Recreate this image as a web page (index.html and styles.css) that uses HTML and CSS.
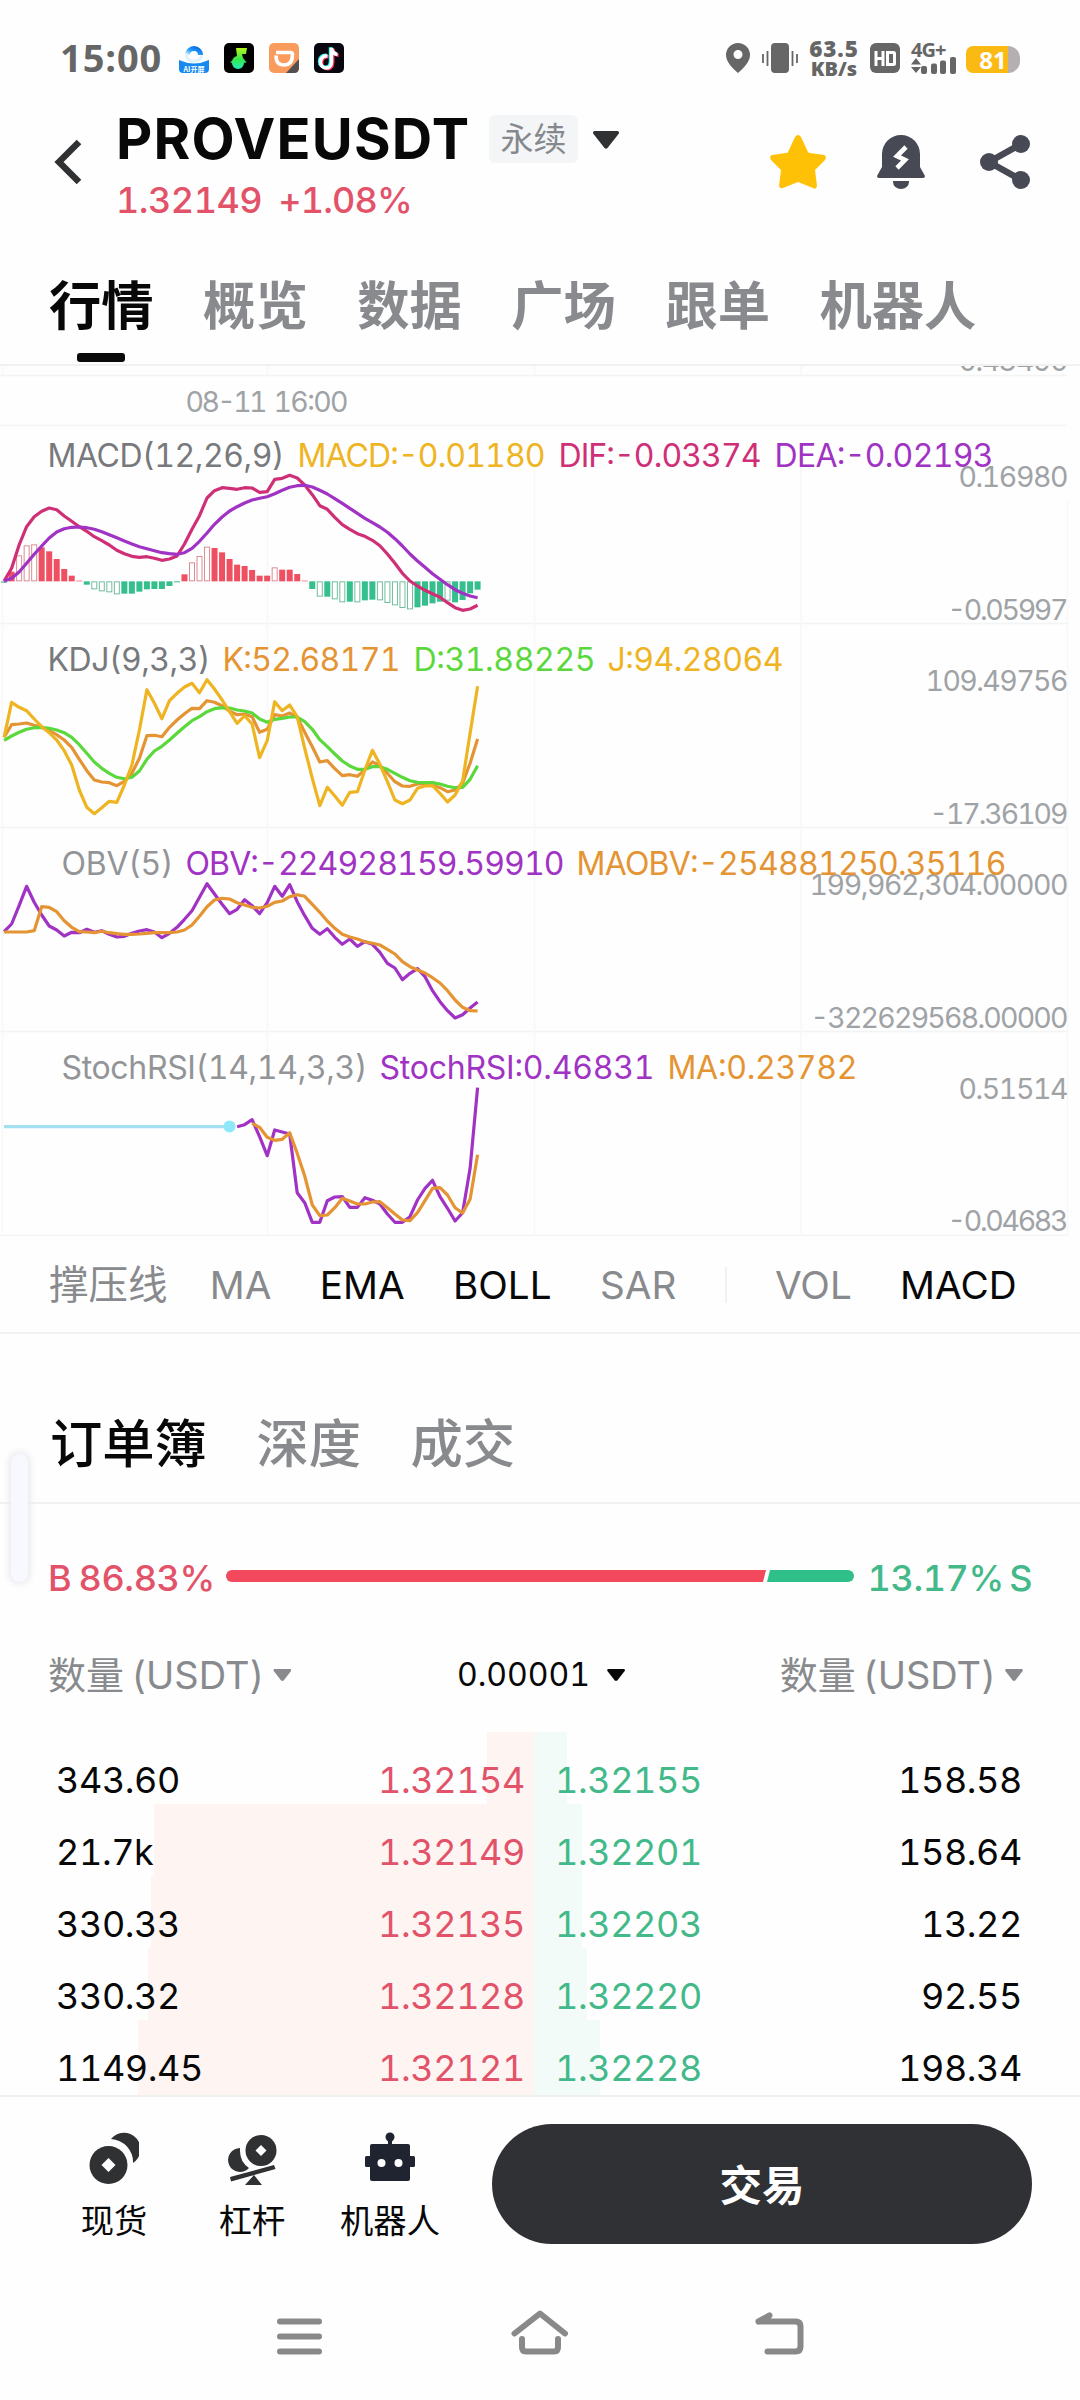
FILE: index.html
```html
<!DOCTYPE html>
<html lang="zh-CN">
<head>
<meta charset="utf-8">
<title>PROVEUSDT</title>
<link rel="stylesheet" href="styles.css">
</head>
<body>
<div class="screen">
  <div class="status">
    <span class="clock">15:00</span>
    <div class="apps">
      <svg viewBox="0 0 30 30"><defs><linearGradient id="ring" x1="1" y1="0" x2="0" y2="1"><stop offset="0" stop-color="#0868e8"/><stop offset=".55" stop-color="#27a0f8"/><stop offset="1" stop-color="#e4f6ff"/></linearGradient></defs><path d="M8.500 17a6.500 6.500 0 1 1 13 0" transform="translate(0 -5)" fill="none" stroke="url(#ring)" stroke-width="5"/><path d="M7 12q1 6 8 6t8-6" fill="none" stroke="#dff2ff" stroke-width="3"/><path d="M0 17q15 7 30 0v9q0 4-4 4H4q-4 0-4-4z" fill="#1689ee"/><text x="15" y="29" class="app-text">AI开屏</text></svg>
      <svg viewBox="0 0 30 30"><defs><linearGradient id="lime" x1="0" y1="0" x2="0" y2="1"><stop offset="0" stop-color="#b8f51c"/><stop offset=".55" stop-color="#35e84a"/><stop offset="1" stop-color="#22efc0"/></linearGradient></defs><rect width="30" height="30" rx="5" fill="#000"/><path d="M12 5h11l-1 6h-4l1 4a7 6 0 0 1 2 3l2 1-3 1a6 6 0 0 1-12 0l-2-1 2-1q1-4 5-5z" fill="url(#lime)"/></svg>
      <svg viewBox="0 0 30 30"><rect width="30" height="30" rx="5" fill="#f99b5c"/><path d="M7 9.500h14.500q2 0 2 2 0 10.500-8.500 10.500T7.200 12.500" fill="none" stroke="#fff" stroke-width="3.600"/><path d="M30 16v9q0 5-5 5h-8z" fill="#55504f"/></svg>
      <svg viewBox="0 0 30 30"><rect width="30" height="30" rx="5" fill="#08070f"/><g fill="none" stroke-width="3.500"><path d="M13.500 13c-5-.5-7 3-7 6 0 4 3 6 6 6s5-3 5-6V5q1 6 6 6.500" stroke="#fe2c55" transform="translate(1.200 .8)"/><path d="M13.500 13c-5-.5-7 3-7 6 0 4 3 6 6 6s5-3 5-6V5q1 6 6 6.500" stroke="#25f4ee" transform="translate(-1 -.8)"/><path d="M13.500 13c-5-.5-7 3-7 6 0 4 3 6 6 6s5-3 5-6V5q1 6 6 6.500" stroke="#fff"/></g></svg>
    </div>
    <div class="system">
      <svg class="pin" viewBox="0 0 24 30"><path fill-rule="evenodd" d="M12 0a12 12 0 0 0-12 12c0 6 5 12 12 18 7-6 12-12 12-18A12 12 0 0 0 12 0zm0 7a4.500 4.500 0 1 1 0 9 4.500 4.500 0 0 1 0-9z"/></svg>
      <svg class="vibrate" viewBox="0 0 36 30"><rect x="9" width="18" height="30" rx="4"/><path d="M1 11v9M5.500 8v15M30.500 8v15M35 11v9" stroke="#666" stroke-width="1.800"/></svg>
      <div class="speed"><b>63.5</b><b>KB/s</b></div>
      <svg class="hd" viewBox="0 0 30 30"><rect width="30" height="30" rx="6"/><path d="M6 8v15M13 8v15M6 15.500h7M17.500 9.500h6q1 0 1 1v10q0 1-1 1h-6z" fill="none" stroke="#fff" stroke-width="3"/></svg>
      <div class="signal"><b>4G+</b><svg viewBox="0 0 45 17"><path d="M0 7.500 5 1l5 6.500zM0 10h10l-5 6z"/><g><rect x="10" y="9" width="6" height="8" rx="2"/><rect x="20" y="6.500" width="6" height="10.500" rx="2"/><rect x="29" y="3.500" width="6" height="13.500" rx="2"/><rect x="39" width="6" height="17" rx="2"/></g></svg></div>
      <div class="battery"><span>81</span></div>
    </div>
  </div>

  <header class="header">
    <svg class="back" viewBox="0 0 28 46"><path d="M25 3 5 23l20 20" fill="none" stroke="#303133" stroke-width="6.500"/></svg>
    <div class="pair">
      <div class="name-row"><h1>PROVEUSDT</h1><span class="badge">永续</span><svg class="drop" viewBox="0 0 26 18"><path d="M1.500 0h23q2.500 1 1 3L14.500 17q-1.500 1.500-3 0L.5 3Q-1 1 1.500 0z" fill="#303133"/></svg></div>
      <div class="price-row"><span>1.32149</span><span class="change">+1.08%</span></div>
    </div>
    <div class="actions">
      <svg class="star" viewBox="0 0 56 54"><path d="M25 2q3-4 6 0l7 15q0 1 2 1l14 2q3 1 1 5L45 35l2 16q-1 4-4 2l-15-6-15 6q-3 1-4-2l2-16L1 25q-2-4 1-5l14-2q2 0 2-1z" fill="#ffc106"/></svg>
      <svg class="bell" viewBox="0 0 48 54"><path d="M5 19a19 19 0 0 1 38 0v13l5 9q0 2-2 2H2q-2 0-2-2l5-9zM16 46h16v1a8 7 0 0 1-16 0z" fill="#474a54"/><path d="m29 12-9 9 8 4-8 8" fill="none" stroke="#fff" stroke-width="4.600"/></svg>
      <svg class="share" viewBox="0 0 50 54"><path d="M41 9 9 27l32 18" fill="none" stroke="#474a54" stroke-width="6.500"/><g fill="#474a54"><circle cx="41" cy="9" r="9"/><circle cx="9" cy="27" r="9"/><circle cx="41" cy="45" r="9"/></g></svg>
    </div>
  </header>

  <nav class="tabs"><span class="active">行情</span><span>概览</span><span>数据</span><span>广场</span><span>跟单</span><span>机器人</span></nav>

  <svg class="charts" viewBox="0 366 1080 870">
    <path class="grid" d="M0 375.500H1067M0 425.500H1067M0 623.500H1067M0 827.500H1067M0 1031.500H1067M0 1235.500H1067"/>
    <path class="grid faint" d="M267.500 366v9M534.500 366v9M801 366v9M267.500 465v771M534.500 465v771M801 465v771M1067.500 500v736M2.500 366v9M2.500 560v676"/>
    <g id="plot"></g>
    <g class="axis" transform="translate(.5 1.300)">
      <text x="958" y="370" textLength="110">0.43490</text>
      <text x="185" y="411" textLength="82">08-11</text>
      <text x="273" y="411" textLength="75">16:00</text>
      <text x="958" y="486" textLength="110">0.16980</text>
      <text x="947" y="619" textLength="121">-0.05997</text>
      <text x="925" y="690" textLength="143">109.49756</text>
      <text x="929" y="823" textLength="139">-17.36109</text>
      <text x="809" y="894" textLength="259">199,962,304.00000</text>
      <text x="810" y="1027" textLength="258">-322629568.00000</text>
      <text x="958" y="1098" textLength="110">0.51514</text>
      <text x="947" y="1230" textLength="121">-0.04683</text>
    </g>
    <g class="legend" transform="translate(.5 .5)">
      <text x="47" y="466" textLength="237" fill="#77797c">MACD(12,26,9)</text>
      <text x="297" y="466" textLength="248" fill="#eeb422">MACD:-0.01180</text>
      <text x="558" y="466" textLength="203" fill="#cf2f77">DIF:-0.03374</text>
      <text x="774" y="466" textLength="219" fill="#a032c4">DEA:-0.02193</text>
      <text x="47" y="670" textLength="163" fill="#77797c">KDJ(9,3,3)</text>
      <text x="222" y="670" textLength="178" fill="#e49432">K:52.68171</text>
      <text x="413" y="670" textLength="182" fill="#5bd83c">D:31.88225</text>
      <text x="607" y="670" textLength="176" fill="#eeb422">J:94.28064</text>
      <text x="61" y="874" textLength="112" fill="#929497">OBV(5)</text>
      <text x="185" y="874" textLength="379" fill="#a032c4">OBV:-224928159.59910</text>
      <text x="576" y="874" textLength="430" fill="#e49432">MAOBV:-254881250.35116</text>
      <text x="61" y="1078" textLength="306" fill="#929497">StochRSI(14,14,3,3)</text>
      <text x="379" y="1078" textLength="275" fill="#a032c4">StochRSI:0.46831</text>
      <text x="667" y="1078" textLength="190" fill="#e49432">MA:0.23782</text>
    </g>
  </svg>

  <div class="indicators"><span>撑压线</span><span>MA</span><span class="on">EMA</span><span class="on">BOLL</span><span>SAR</span><i></i><span>VOL</span><span class="on">MACD</span></div>

  <nav class="tabs book-tabs"><span class="active">订单簿</span><span>深度</span><span>成交</span></nav>

  <div class="ratio">
    <span class="buy">B 86.83%</span>
    <svg viewBox="0 0 628 12"><path d="M6 0h534l-3 12H6A6 6 0 0 1 6 0z" fill="#f3495d"/><path d="M544 0h78a6 6 0 0 1 0 12h-81z" fill="#2fbf89"/></svg>
    <span class="sell">13.17% S</span>
  </div>

  <div class="columns">
    <span class="qty">数量 (USDT)<i class="caret"></i></span>
    <span class="step">0.00001<i class="caret"></i></span>
    <span class="qty right">数量 (USDT)<i class="caret"></i></span>
  </div>

  <div class="book">
    <div class="row"><div class="bid"><i style="width:47px"></i><span>343.60</span><b>1.32154</b></div><div class="ask"><i style="width:33px"></i><b>1.32155</b><span>158.58</span></div></div>
    <div class="row"><div class="bid"><i style="width:380px"></i><span>21.7k</span><b>1.32149</b></div><div class="ask"><i style="width:48px"></i><b>1.32201</b><span>158.64</span></div></div>
    <div class="row"><div class="bid"><i style="width:383px"></i><span>330.33</span><b>1.32135</b></div><div class="ask"><i style="width:48px"></i><b>1.32203</b><span>13.22</span></div></div>
    <div class="row"><div class="bid"><i style="width:386px"></i><span>330.32</span><b>1.32128</b></div><div class="ask"><i style="width:53px"></i><b>1.32220</b><span>92.55</span></div></div>
    <div class="row"><div class="bid"><i style="width:396px"></i><span>1149.45</span><b>1.32121</b></div><div class="ask"><i style="width:66px"></i><b>1.32228</b><span>198.34</span></div></div>
  </div>

  <footer class="dock">
    <div class="dock-item"><svg viewBox="0 0 50 54"><path d="M22 7A16.500 16.500 0 1 1 44 31 23 23 0 0 0 22 7z" fill="#303133"/><circle cx="19.500" cy="33" r="23.500" fill="#fefefe"/><circle cx="19.500" cy="33" r="19" fill="#303133"/><path d="m19.500 26 7 7-7 7-7-7z" fill="#fff"/></svg><span>现货</span></div>
    <div class="dock-item"><svg viewBox="0 0 50 54"><g fill="#303133"><path d="M13 16v3q0 11 9 17a12 12 0 1 1-9-20z"/><circle cx="34" cy="18.500" r="18" fill="#fefefe"/><circle cx="34" cy="18.500" r="15.500"/><path d="m3 45 44-12 1.500 4L4 49.500zM27 43l8 10H18z"/></g><path d="m34 13 5.500 5.500L34 24l-5.500-5.500z" fill="#fff"/></svg><span>杠杆</span></div>
    <div class="dock-item wide"><svg viewBox="0 0 50 54"><g fill="#202330"><circle cx="25" cy="5" r="4.500"/><path d="M23 7h4v6h-4z"/><rect x="5" y="12" width="40" height="37" rx="2"/><rect y="24" width="50" height="11" rx="1.500"/></g><g fill="#fff"><circle cx="16.500" cy="31" r="4"/><circle cx="33.500" cy="31" r="4"/></g></svg><span>机器人</span></div>
    <button class="trade">交易</button>
  </footer>

  <div class="system-nav">
    <svg viewBox="0 0 60 46"><path d="M10 12.500h39M10 27.500h39M10 42.500h39"/></svg>
    <svg viewBox="0 0 60 46"><path d="M4.500 24.500 30 4.500l25 20M12 30v8q0 4.500 4 4.500h28q4 0 4-4.500v-8"/></svg>
    <svg viewBox="0 0 60 46"><path d="m19.500 6.500-11 6M8.500 12.500h37q5 0 5 5v20q0 5-5 5H17.500"/></svg>
  </div>
  <div class="edge-handle"></div>
</div>
<script src="charts.js"></script>
</body>
</html>
```
FILE: styles.css
```css
* { box-sizing: border-box; }
body { margin: 0; background: #fefefe; font-family: Inter, "Noto Sans CJK SC", sans-serif; font-feature-settings: "tnum"; color: #080808; }
svg { display: block; }
.screen { position: relative; width: 1080px; height: 2400px; overflow: hidden; display: flex; flex-direction: column; }
.screen > * { flex-shrink: 0; }

.status { height: 116px; padding: 0 60px; display: flex; align-items: center; color: #666; fill: #666; }
.clock { width: 119px; font: 700 38px/40px "Open Sans", sans-serif; letter-spacing: .9px; margin-top: -2px; }
.apps { display: flex; gap: 15px; }
.apps svg { width: 30px; height: 30px; }
.app-text { font: 700 7px "Noto Sans CJK SC", sans-serif; fill: #fff; text-anchor: middle; }
.system { margin-left: auto; display: flex; align-items: center; }
.pin { width: 24px; height: 30px; }
.vibrate { width: 36px; height: 30px; margin-left: 12px; }
.speed { width: 50px; margin-left: 11px; display: flex; flex-direction: column; align-items: center; font: 700 20px/20px "Open Sans", sans-serif; }
.speed b:first-child { font-size: 22.500px; line-height: 21px; letter-spacing: .8px; }
.hd { width: 30px; height: 30px; margin-left: 11px; }
.signal { width: 45px; height: 32px; margin-left: 11px; }
.signal b { display: block; height: 15px; font: 700 20px/15px "Open Sans", sans-serif; letter-spacing: -1px; }
.signal svg { width: 45px; height: 17px; }
.battery { width: 54px; height: 27px; margin: 2px 0 0 10px; border-radius: 7px 12px 12px 7px; background: linear-gradient(90deg, #fbba13 42px, #b5afb1 42px); color: #fff; font: 700 24px/27px "Open Sans", sans-serif; text-align: center; }

.header { height: 130px; padding: 0 50px 0 54px; display: flex; }
.back { width: 28px; height: 46px; margin-top: 23px; }
.pair { margin-left: 34px; }
.name-row { display: flex; align-items: flex-start; height: 62px; }
h1 { margin: -13px 0 0; width: 373px; font-size: 56px; line-height: 72px; font-weight: 700; letter-spacing: 1.200px; }
.badge { width: 89px; height: 48px; margin-top: -1px; border-radius: 6px; background: #f3f5f7; color: #85888c; font-size: 33px; line-height: 48px; text-align: center; }
.drop { width: 26px; height: 18px; margin: 15px 0 0 15px; }
.price-row { display: flex; margin-top: 0; color: #e2536a; font-size: 36px; line-height: 44px; font-weight: 500; letter-spacing: -.5px; }
.change { margin-left: 16px; letter-spacing: -.8px; }
.actions { margin-left: auto; display: flex; align-items: flex-start; padding-top: 19px; }
.star { width: 56px; height: 54px; }
.bell { width: 48px; height: 54px; margin-left: 51px; }
.share { width: 50px; height: 54px; margin-left: 55px; }

.tabs { height: 120px; padding: 26px 49px 0; display: flex; gap: 49.500px; border-bottom: 2px solid #f1f1f2; color: #888a8d; font-size: 52.300px; font-weight: 700; line-height: 60px; font-family: "Noto Sans CJK SC", sans-serif; }
.tabs .active { color: #080808; position: relative; }
.tabs .active::after { content: ""; position: absolute; left: 28px; bottom: 2px; width: 48px; height: 9px; border-radius: 3px; background: #0a0a0a; }

.charts { width: 1080px; height: 870px; }
.grid { fill: none; stroke: #f3f4f4; stroke-width: 1.500; }
.faint { stroke: #f8f8f8; }
.axis { font-size: 28.500px; fill: #a0a3a6; }
.legend { font-size: 32px; }
.line { fill: none; stroke-width: 3.200; stroke-linejoin: round; }

.indicators { height: 98px; padding: 2px 0 0 49px; display: flex; align-items: center; gap: 48.300px; border-bottom: 2px solid #f1f1f2; color: #888a8d; font-size: 38.700px; line-height: 60px; white-space: nowrap; }
.indicators span:first-child { font-size: 39.500px; margin-right: -6px; }
.indicators .on { color: #080808; }
.indicators i { width: 2px; height: 36px; background: #f1f1f2; }

.book-tabs { height: 170px; padding-top: 76px; padding-left: 50px; font-weight: 500; }
.book-tabs .active::after { display: none; }

.ratio { height: 144px; padding: 0 48px; display: flex; align-items: center; font-size: 36px; font-weight: 500; }
.ratio svg { width: 628px; height: 12px; }
.ratio span { white-space: nowrap; padding-top: 3px; letter-spacing: -.4px; word-spacing: -2px; }
.buy { width: 178px; color: #e2536a; }
.ratio .sell { margin-left: auto; color: #43b98a; word-spacing: -4px; }

.columns { height: 84px; padding: 0 57px 0 48px; display: grid; grid-template-columns: 1fr auto 1fr; align-items: start; color: #888a8d; font-size: 38px; line-height: 54px; }
.columns span { display: flex; align-items: center; white-space: nowrap; }
.qty { word-spacing: -3px; }
.right { justify-content: flex-end; }
.columns .step { color: #080808; font-size: 32px; padding-left: 11px; }
.caret { width: 18px; height: 12px; margin-left: 9px; background: currentColor; clip-path: polygon(4% 0, 96% 0, 100% 12%, 56% 98%, 44% 98%, 0 12%); }
.step .caret { margin-left: 17px; }

.book { height: 363px; overflow: hidden; }
.row { height: 72px; display: grid; grid-template-columns: 534px 1fr; font-size: 36px; line-height: 60px; letter-spacing: -.4px; }
.row:last-child { height: 75px; }
.bid, .ask { position: relative; display: flex; justify-content: space-between; padding-top: 18px; height: 100%; }
.bid { padding-left: 56px; padding-right: 9px; }
.ask { padding-left: 21px; padding-right: 58px; }
.bid i, .ask i { position: absolute; top: 0; bottom: 0; z-index: -1; }
.bid i { right: 0; background: #fef5f3; }
.ask i { left: 0; background: #f2fbf7; }
.row b { font-weight: 400; }
.bid b { color: #e2536a; }
.ask b { color: #43b98a; }

.dock { height: 193px; padding: 27px 48px 0 64px; display: flex; border-top: 2px solid #f0f0f0; }
.dock-item { width: 100px; margin-right: 38px; display: flex; flex-direction: column; align-items: center; font-size: 33.300px; line-height: 48px; white-space: nowrap; }
.dock-item svg { width: 50px; height: 54px; margin-top: 8px; margin-bottom: 11px; }
.dock-item.wide { margin-right: 0; }
.trade { width: 540px; height: 120px; margin-left: auto; border: 0; border-radius: 60px; background: #303134; color: #fff; font: 700 42.500px/118px "Noto Sans CJK SC", sans-serif; padding: 0 0 2px; }

.system-nav { height: 112px; padding: 21px 270px 0 270px; display: flex; justify-content: space-between; }
.system-nav svg { width: 60px; height: 46px; fill: none; stroke: #898989; stroke-width: 6; stroke-linecap: round; stroke-linejoin: round; }
.edge-handle { position: absolute; left: 11px; top: 1454px; width: 17px; height: 128px; border-radius: 9px; background: #f8f9ff; box-shadow: 0 0 7px 2px #e8e8ec; }
```
FILE: charts.js
```js
// Samples are evenly spaced; values are heights in thirds of a pixel below each panel's origin.
const plot = document.getElementById('plot');
const STEP = 7.516, START = 4.1;
const xAt = i => START + i * STEP;

function add(tag, attrs) {
  const el = document.createElementNS('http://www.w3.org/2000/svg', tag);
  for (const key in attrs) el.setAttribute(key, attrs[key]);
  plot.appendChild(el);
}
function line(origin, color, values, first = 0) {
  const points = values.map((v, i) => xAt(i + first).toFixed(1) + ',' + (origin + v / 3).toFixed(1)).join(' ');
  add('polyline', { class: 'line', stroke: color, points });
}

const ZERO = 1024;
const bars = [1026,-995,946,916,913,-922,-934,-957,-987,-1007,-1022,-1034,1048,1054,1057,1063,-1061,-1061,-1055,-1048,-1047,-1047,-1038,-1027,-1003,967,948,920,-924,-937,-957,-974,-978,-990,-1007,-1007,982,-989,-989,-1002,-1022,-1047,1070,-1070,1078,1087,-1085,1087,-1081,-1079,1081,1089,1096,1104,1108,-1102,-1097,-1090,-1085,1082,-1087,-1080,-1060,-1049];
// A negative entry is a solid bar, a positive one a hollow bar.
bars.forEach((value, i) => {
  const v = Math.abs(value), up = v < ZERO, solid = value < 0;
  const top = 240 + Math.min(v, ZERO) / 3, height = Math.abs(v - ZERO) / 3;
  const inset = solid ? 0 : 0.5;
  add('rect', {
    x: xAt(i) - 3 + inset, y: top + inset, width: 6 - inset * 2, height: Math.max(0.5, height - inset * 2),
    fill: solid ? (up ? '#ef5061' : '#35bf8c') : '#fff', stroke: solid ? 'none' : (up ? '#dc8c94' : '#72bd9e')
  });
});

line(240, '#cf2f77', [1023,985,915,860,830,814,804,809,828,844,860,874,890,902,915,931,941,949,952,950,955,961,957,948,912,868,827,774,752,743,745,748,743,744,757,755,718,715,706,714,735,764,797,808,832,854,868,881,889,901,917,942,970,1000,1023,1038,1051,1061,1072,1088,1103,1111,1107,1096]);
line(240, '#a032c4', [1023,1015,996,970,943,918,894,876,866,862,861,863,868,875,884,893,903,912,920,926,932,938,941,943,938,925,904,879,853,831,813,800,789,780,775,770,761,751,742,737,736,741,751,762,776,790,805,820,835,848,861,877,896,918,942,963,982,1001,1018,1034,1049,1060,1068,1073]);

line(620, '#e49432', [352,314,312,309,316,322,332,344,360,382,418,452,480,486,488,497,484,460,415,347,346,350,322,300,281,265,266,242,247,257,274,284,282,290,337,328,284,288,279,292,337,380,426,422,446,467,464,469,450,426,436,460,485,498,499,492,491,495,503,515,510,490,430,357]);
line(620, '#5bd83c', [361,348,337,328,323,322,325,330,338,352,374,400,426,445,460,472,476,472,453,418,393,379,360,340,320,302,290,275,266,263,264,270,273,279,297,307,298,295,291,291,305,328,359,380,402,423,438,448,448,440,440,448,460,472,482,487,488,488,492,499,503,502,478,437]);
line(620, '#eeb422', [352,247,262,272,297,320,338,360,392,435,510,562,581,563,544,547,495,435,330,209,250,296,242,220,201,190,218,179,207,240,275,310,287,312,413,362,245,272,255,290,385,475,557,502,528,556,517,515,450,391,433,485,540,551,540,505,498,497,520,546,525,483,340,199]);

line(620, '#a032c4', [935,912,857,799,847,885,918,930,948,937,938,928,937,932,943,951,949,940,933,929,936,953,940,922,898,872,832,791,822,853,881,868,839,857,881,848,799,829,794,845,887,925,943,926,952,973,957,979,965,973,997,1030,1044,1079,1060,1046,1070,1112,1145,1172,1194,1184,1164,1146]);
line(620, '#e49432', [936,936,936,936,932,860,862,875,902,922,935,936,938,934,938,941,943,943,942,940,938,938,938,936,930,915,889,860,840,835,837,848,855,862,864,859,847,843,830,824,829,853,877,903,925,943,951,957,965,970,975,988,1002,1025,1040,1050,1059,1073,1089,1112,1140,1162,1172,1173]);

line(1030, '#a4e0ef', Array(31).fill(290));
add('circle', { cx: 229.5, cy: 1126.5, r: 6, fill: '#8ee8fa' });
line(1030, '#a032c4', [290,284,269,320,377,300,306,312,488,518,577,577,512,501,500,532,532,503,511,522,552,577,577,560,510,475,451,500,535,573,548,415,173], 31);
line(1030, '#e49432', [280,292,322,331,328,308,370,438,525,557,555,533,505,513,522,522,516,515,533,552,570,572,548,512,475,473,495,533,549,508,374], 33);
```
